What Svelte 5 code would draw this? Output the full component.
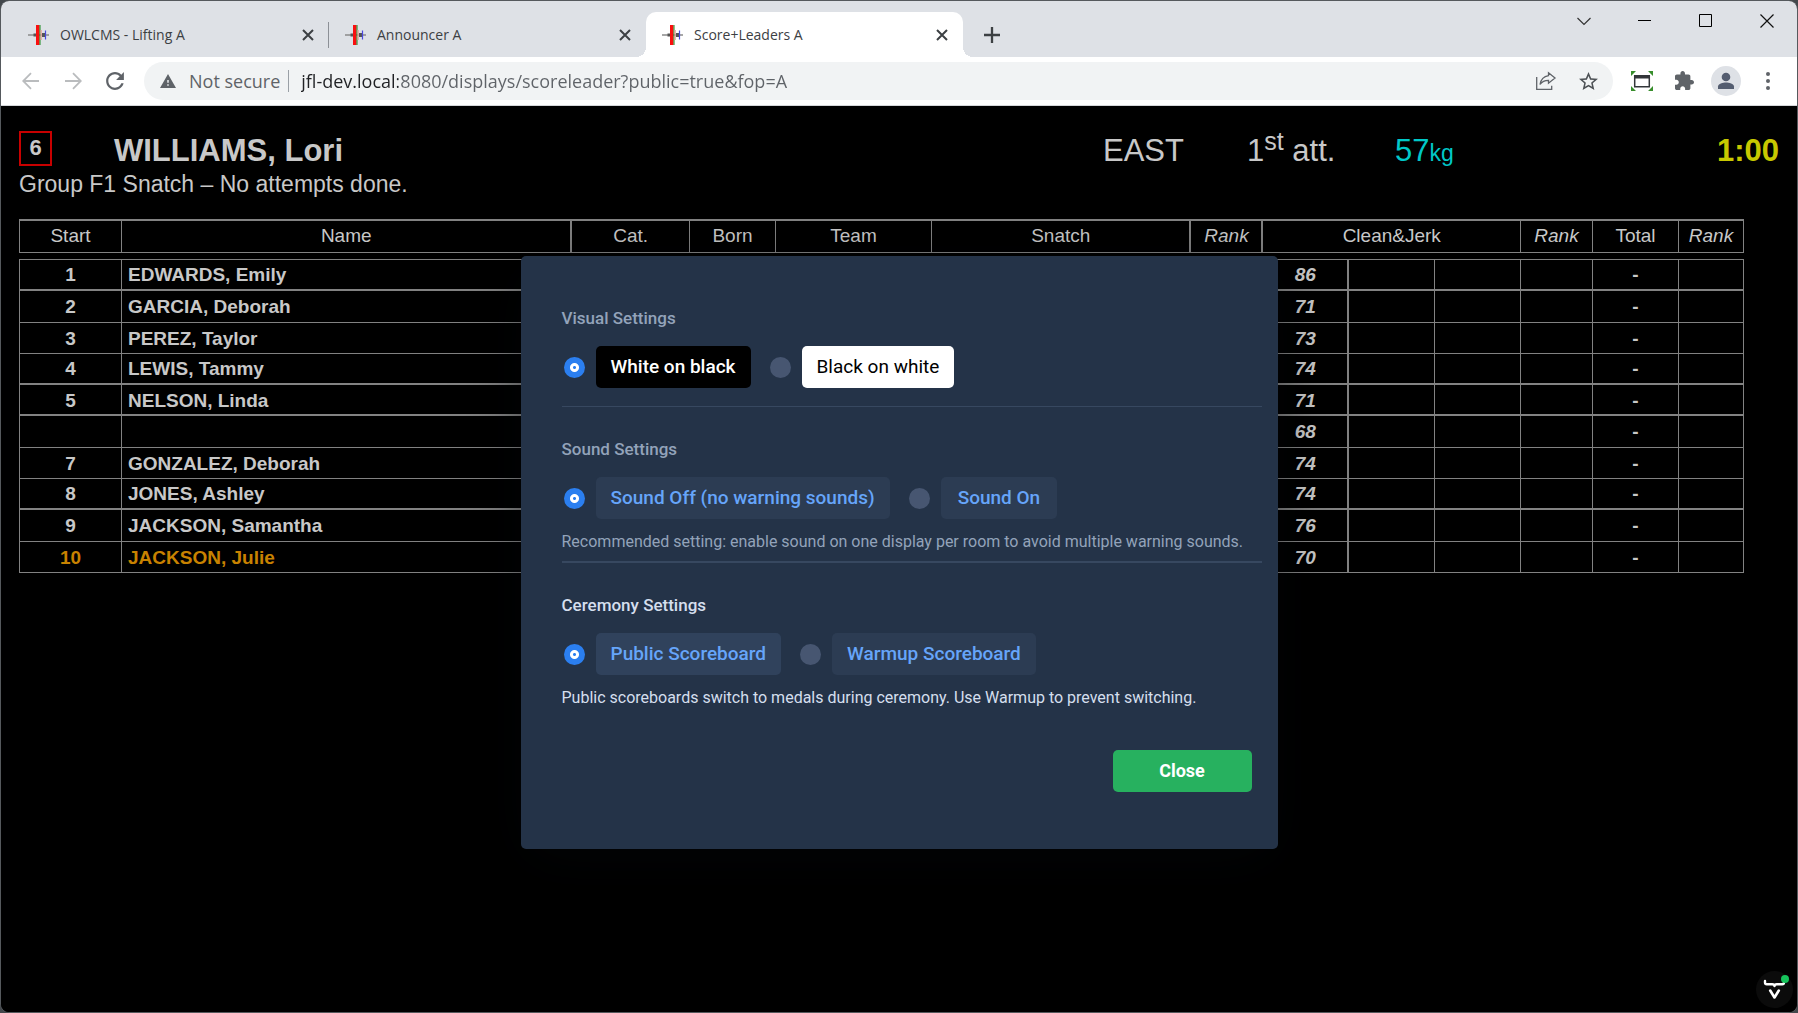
<script lang="ts">
  const tabs = [
    { title: 'OWLCMS - Lifting A', active: false },
    { title: 'Announcer A', active: false },
    { title: 'Score+Leaders A', active: true }
  ];

  const athletes = [
    { start: '1', name: 'EDWARDS, Emily', request: '86' },
    { start: '2', name: 'GARCIA, Deborah', request: '71' },
    { start: '3', name: 'PEREZ, Taylor', request: '73' },
    { start: '4', name: 'LEWIS, Tammy', request: '74' },
    { start: '5', name: 'NELSON, Linda', request: '71' },
    { start: '', name: '', request: '68' },
    { start: '7', name: 'GONZALEZ, Deborah', request: '74' },
    { start: '8', name: 'JONES, Ashley', request: '74' },
    { start: '9', name: 'JACKSON, Samantha', request: '76' },
    { start: '10', name: 'JACKSON, Julie', request: '70', next: true }
  ];

  let theme = $state('dark');
  let sound = $state('off');
  let ceremony = $state('public');
  let open = $state(true);
  let url = $state('jfl-dev.local:8080/displays/scoreleader?public=true&fop=A');
</script>

<div class="window">
  <div class="strip">
    {#each tabs as tab}
      <div class="tab" class:active={tab.active}>
        <svg class="favicon" viewBox="0 0 21 20" aria-hidden="true">
          <path d="M0 10h21" stroke="#8a8a8a" stroke-width="1.4" />
          <path d="M5.500 8.500h2.500v3H5.500zM14 8h3v4h-3z" fill="#555" />
          <path d="M8 0h3.500v20H8z" fill="#fa0f0f" />
          <path d="M11.500 0h1v20h-1z" fill="#158a1c" />
          <path d="M12.500 5h1.300v10h-1.300z" fill="#e9a39c" />
          <path d="M17.500 5.500v9" stroke="#4b49e0" stroke-width="1.200" />
        </svg>
        <button class="title">{tab.title}</button>
        <button class="x" aria-label="Close tab">
          <svg viewBox="0 0 12 12" width="12" height="12"><path d="M1 1l10 10M11 1L1 11" stroke="#3c4043" stroke-width="2" /></svg>
        </button>
      </div>
    {/each}
    <button class="plus" aria-label="New tab">
      <svg viewBox="0 0 16 16" width="16" height="16"><path d="M8 0v16M0 8h16" stroke="#3c4043" stroke-width="2.300" /></svg>
    </button>
    <div class="controls">
      <button aria-label="Search tabs"><svg viewBox="0 0 14 14" width="14" height="14"><path d="M.5 4L7 10.500 13.500 4" stroke="#333" stroke-width="1.200" fill="none" /></svg></button>
      <button aria-label="Minimize"><svg viewBox="0 0 14 14" width="14" height="14"><path d="M0 6.500h13" stroke="#000" /></svg></button>
      <button aria-label="Maximize"><svg viewBox="0 0 14 14" width="14" height="14"><path d="M.5.5h12v12H.5z" stroke="#000" fill="none" /></svg></button>
      <button aria-label="Close window"><svg viewBox="0 0 14 14" width="14" height="14"><path d="M.5.500l13 13M13.500.500l-13 13" stroke="#111" stroke-width="1.200" /></svg></button>
    </div>
  </div>

  <div class="toolbar">
    <button class="tool" aria-label="Back"><svg viewBox="0 0 18 18" width="18" height="18"><path d="M17 9H1.500M9 1.200L1.200 9 9 16.800" stroke="#babcbe" stroke-width="1.800" fill="none" /></svg></button>
    <button class="tool" aria-label="Forward"><svg viewBox="0 0 18 18" width="18" height="18"><path d="M1 9h15.500M9 1.200L16.800 9 9 16.800" stroke="#babcbe" stroke-width="1.800" fill="none" /></svg></button>
    <button class="tool" aria-label="Reload"><svg viewBox="3 3 18 18" width="20" height="20"><path fill="#5f6368" d="M17.650 6.350C16.200 4.900 14.210 4 12 4c-4.420 0-7.990 3.580-7.990 8s3.570 8 7.990 8c3.730 0 6.840-2.550 7.730-6h-2.080c-.82 2.330-3.040 4-5.650 4-3.310 0-6-2.690-6-6s2.690-6 6-6c1.660 0 3.140.69 4.220 1.780L13 11h7V4l-2.350 2.350z" /></svg></button>
    <div class="address">
      <svg viewBox="1 2 22 19" width="16" height="14" aria-hidden="true"><path fill="#5f6368" d="M1 21h22L12 2 1 21zm12-3h-2v-2h2v2zm0-4h-2v-4h2v4z" /></svg>
      <button class="security">Not secure</button>
      <input class="url" aria-label="Address" bind:value={url} spellcheck="false" />
      <button class="tool" aria-label="Share">
        <svg viewBox="0 0 22 20" width="22" height="20" fill="none" stroke="#5f6368" stroke-width="1.300"><path d="M1.700 6v12.300h15v-3.600" /><path d="M13.500 1.800l6.500 5.200-6.500 5.200V9.300c-4 0-6.500 1.200-8.500 4.200.8-4.500 3.400-8 8.500-8.800z" /></svg>
      </button>
      <button class="tool" aria-label="Bookmark"><svg viewBox="2 2 20 19" width="19" height="18"><path fill="#4d5155" d="M22 9.240l-7.190-.62L12 2 9.190 8.630 2 9.240l5.460 4.730L5.820 21 12 17.270 18.180 21l-1.630-7.030L22 9.240zM12 15.400l-3.760 2.270 1-4.280-3.320-2.880 4.380-.38L12 6.100l1.710 4.040 4.380.38-3.320 2.880 1 4.280L12 15.400z" /></svg></button>
    </div>
    <button class="tool" aria-label="Screen capture">
      <svg viewBox="0 0 22 20" width="22" height="20"><path fill="#388e2c" d="M0 0h5L0 5zM22 0h-5l5 5zM0 20h5l-5-5zM22 20h-5l5-5z" /><path d="M3.700 4.800h14.600v11H3.700z" fill="#fff" stroke="#33363a" stroke-width="1.500" /><path d="M3.500 4.500h15v3h-15z" fill="#33363a" /></svg>
    </button>
    <button class="tool" aria-label="Extensions"><svg viewBox="2 1 21 21" width="19" height="19"><path fill="#5f6368" d="M20.500 11H19V7c0-1.100-.9-2-2-2h-4V3.500C13 2.120 11.880 1 10.500 1S8 2.120 8 3.500V5H4c-1.100 0-1.990.9-1.990 2v3.800H3.500c1.490 0 2.700 1.210 2.700 2.700s-1.210 2.700-2.700 2.700H2V20c0 1.100.9 2 2 2h3.800v-1.500c0-1.490 1.210-2.700 2.700-2.700 1.490 0 2.700 1.210 2.700 2.700V22H17c1.100 0 2-.9 2-2v-4h1.500c1.380 0 2.500-1.120 2.500-2.500S21.880 11 20.500 11z" /></svg></button>
    <button class="tool" aria-label="Profile"><svg viewBox="0 0 30 30" width="30" height="30"><circle cx="15" cy="15" r="15" fill="#dee1e6" /><circle cx="15" cy="11" r="4.300" fill="#545d70" /><path fill="#545d70" d="M7 23v-2.400c0-2.900 5-4.100 8-4.100s8 1.200 8 4.100V23z" /></svg></button>
    <button class="tool" aria-label="Menu"><svg viewBox="0 0 4 18" width="4" height="18" fill="#5f6368"><circle cx="2" cy="2" r="2" /><circle cx="2" cy="9" r="2" /><circle cx="2" cy="16" r="2" /></svg></button>
  </div>

  <main class="board">
    <header class="lifter">
      <div class="number">6</div>
      <div class="name">WILLIAMS, Lori</div>
      <div>EAST</div>
      <div>1<sup>st</sup> att.</div>
      <div class="weight">57<small>kg</small></div>
      <div class="clock">1:00</div>
    </header>
    <p class="group">Group F1 Snatch – No attempts done.</p>

    <table>
      <colgroup>
        <col class="c-start" /><col /><col class="c-cat" /><col class="c-born" /><col class="c-team" />
        <col class="c-first" /><col class="c-try" /><col class="c-try" /><col class="c-rank" />
        <col class="c-try" /><col class="c-try" /><col class="c-try" /><col class="c-rank" />
        <col class="c-total" /><col class="c-last" />
      </colgroup>
      <thead>
        <tr>
          <th>Start</th>
          <th class="heavy">Name</th>
          <th>Cat.</th>
          <th>Born</th>
          <th>Team</th>
          <th class="heavy" colspan="3">Snatch</th>
          <th class="heavy rank">Rank</th>
          <th colspan="3">Clean&amp;Jerk</th>
          <th class="rank">Rank</th>
          <th>Total</th>
          <th class="rank">Rank</th>
        </tr>
      </thead>
      <tbody>
        <tr class="spacer"><td colspan="15"></td></tr>
        {#each athletes as a}
          <tr class:next={a.next}>
            <td>{a.start}</td>
            <td class="who">{a.name}</td>
            <td></td><td></td><td></td>
            <td></td><td></td><td></td><td></td>
            <td class="request">{a.request}</td>
            <td></td><td></td><td></td>
            <td class="sum">-</td>
            <td></td>
          </tr>
        {/each}
      </tbody>
    </table>

    {#if open}
      <div class="overlay">
        <div class="dialog" role="dialog" aria-label="Display settings">
          <fieldset>
            <legend>Visual Settings</legend>
            <div class="options">
              <label><input type="radio" value="dark" bind:group={theme} /><span class="chip black">White on black</span></label>
              <label><input type="radio" value="light" bind:group={theme} /><span class="chip white">Black on white</span></label>
            </div>
          </fieldset>
          <hr />
          <fieldset>
            <legend>Sound Settings</legend>
            <div class="options">
              <label><input type="radio" value="off" bind:group={sound} /><span class="chip">Sound Off (no warning sounds)</span></label>
              <label><input type="radio" value="on" bind:group={sound} /><span class="chip wide">Sound On</span></label>
            </div>
            <p>Recommended setting: enable sound on one display per room to avoid multiple warning sounds.</p>
          </fieldset>
          <hr class="thick" />
          <fieldset class="bright">
            <legend>Ceremony Settings</legend>
            <div class="options">
              <label><input type="radio" value="public" bind:group={ceremony} /><span class="chip hover">Public Scoreboard</span></label>
              <label><input type="radio" value="warmup" bind:group={ceremony} /><span class="chip">Warmup Scoreboard</span></label>
            </div>
            <p>Public scoreboards switch to medals during ceremony. Use Warmup to prevent switching.</p>
          </fieldset>
          <button class="close" onclick={() => (open = false)}>Close</button>
        </div>
      </div>
    {/if}

    <button class="devtools" aria-label="Developer tools">
      <svg viewBox="0 0 37 37" width="37" height="37">
        <circle cx="18.500" cy="18.500" r="18.500" fill="#0b0b0b" />
        <path d="M9 10v1.500c0 1.200.6 1.800 1.800 1.800h5.400c1.400 0 2.300.6 2.300 1.800 0-1.200.9-1.800 2.300-1.800h5.400c1.200 0 1.800-.6 1.800-1.800" fill="none" stroke="#fff" stroke-width="2.400" stroke-linecap="round" stroke-linejoin="round" />
        <path d="M14.200 19.500l4.300 7 4.300-7" fill="none" stroke="#fff" stroke-width="2.600" stroke-linecap="round" stroke-linejoin="round" />
        <circle cx="29" cy="8" r="4" fill="#16c35b" />
      </svg>
    </button>
  </main>
</div>

<style>
  :global(body) {
    background: #43484c;
  }
  * {
    box-sizing: border-box;
  }
  button {
    border: 0;
    padding: 0;
    background: none;
    font: inherit;
    color: inherit;
    cursor: pointer;
  }
  svg {
    display: block;
    flex: none;
  }
  .window {
    display: flex;
    flex-direction: column;
    min-height: 100vh;
    border: 1px solid #55595d;
    border-radius: 9px;
    overflow: hidden;
    background: #000;
    font-family: 'Open Sans', 'Noto Sans', sans-serif;
  }

  /* tab strip */
  .strip {
    display: flex;
    align-items: flex-end;
    height: 56px;
    padding-left: 11px;
    background: #dee1e6;
    color: #3c4043;
  }
  .tab {
    position: relative;
    display: flex;
    align-items: center;
    gap: 11px;
    width: 317px;
    height: 45px;
    padding: 0 15px 0 16px;
    font-size: 14px;
  }
  .tab:first-child::after {
    content: '';
    position: absolute;
    right: 0;
    top: 10px;
    width: 1px;
    height: 26px;
    background: #8c9096;
  }
  .tab.active {
    background: #fff;
    border-radius: 10px 10px 0 0;
  }
  .tab.active::before,
  .tab.active::after {
    content: '';
    position: absolute;
    bottom: 0;
    width: 10px;
    height: 10px;
  }
  .tab.active::before {
    right: 100%;
    background: radial-gradient(circle at 0 0, transparent 10px, #fff 10px);
  }
  .tab.active::after {
    left: 100%;
    background: radial-gradient(circle at 100% 0, transparent 10px, #fff 10px);
  }
  .favicon {
    width: 21px;
    height: 20px;
  }
  .title {
    flex: 1;
    text-align: left;
    white-space: nowrap;
  }
  .plus {
    width: 28px;
    height: 45px;
    margin-left: 15px;
    display: grid;
    place-items: center;
  }
  .controls {
    display: flex;
    align-self: flex-start;
    margin-left: auto;
  }
  .controls button {
    display: grid;
    place-items: center;
    width: 61px;
    height: 40px;
  }

  /* toolbar */
  .toolbar {
    display: flex;
    align-items: center;
    height: 49px;
    padding: 0 8px 1px 9px;
    background: #fff;
    border-bottom: 1px solid #d5d7da;
  }
  .tool {
    flex: none;
    display: grid;
    place-items: center;
    width: 42px;
    height: 38px;
  }
  .address {
    flex: 1;
    display: flex;
    align-items: center;
    height: 38px;
    margin: 0 8px;
    padding: 0 4px 0 16px;
    border-radius: 19px;
    background: #f1f3f4;
    color: #5f6368;
    font-size: 18px;
  }
  .security {
    margin-left: 13px;
    padding-right: 8px;
    border-right: 1px solid #9aa0a6;
    line-height: 22px;
    white-space: nowrap;
  }
  .url {
    flex: 1;
    min-width: 0;
    margin-left: 12px;
    padding: 0;
    border: 0;
    outline: 0;
    font: inherit;
    line-height: 24px;
    color: #5f6368;
    background: linear-gradient(90deg, #202124 97px, #5f6368 97px);
    background-clip: text;
    -webkit-text-fill-color: transparent;
  }

  /* scoreboard */
  .board {
    position: relative;
    flex: 1;
    padding: 25px 18px 0;
    background: #000;
    color: #c8c8c8;
    font-family: 'Liberation Sans', Arial, sans-serif;
  }
  .lifter {
    display: grid;
    grid-template-columns: 95px 1fr 144px 148px 148px 236px;
    align-items: end;
    height: 39px;
    font-size: 31px;
    line-height: 38px;
    white-space: nowrap;
  }
  .number {
    align-self: start;
    width: 33px;
    height: 35px;
    border: 2px solid #c80000;
    font-size: 22px;
    font-weight: 700;
    line-height: 29px;
    text-align: center;
  }
  .name {
    font-weight: 700;
  }
  sup {
    font-size: 25px;
    line-height: 0;
  }
  .weight {
    color: #00c8c8;
  }
  small {
    font-size: 23px;
    line-height: 0;
  }
  .clock {
    color: #c8c800;
    font-weight: 700;
    text-align: right;
  }
  .group {
    margin: 0 0 21px;
    font-size: 23px;
    line-height: 28px;
  }
  table {
    width: calc(100% - 35px);
    table-layout: fixed;
    border-collapse: collapse;
    font-size: 19px;
    line-height: 22px;
  }
  .c-start { width: 102px; }
  .c-cat { width: 118px; }
  .c-born { width: 86px; }
  .c-team { width: 156px; }
  .c-first { width: 87px; }
  .c-try { width: 86px; }
  .c-rank { width: 72px; }
  .c-total { width: 86px; }
  .c-last { width: 65px; }
  th,
  td {
    padding: 0;
    height: 31px;
    border: 1px solid #828282;
    text-align: center;
  }
  th {
    height: 32px;
    border-top-width: 2px;
    font-weight: 400;
  }
  th.heavy {
    border-right-width: 2px;
  }
  .rank {
    font-style: italic;
  }
  td {
    padding-top: 2px;
    font-weight: 700;
  }
  .spacer td {
    height: 7px;
    padding: 0;
    border-left: 0;
    border-right: 0;
    line-height: 0;
  }
  tr:nth-child(2) td,
  tr:nth-child(5) td,
  tr:nth-child(6) td,
  tr:nth-child(9) td {
    border-bottom-width: 2px;
  }
  tr:nth-child(3) td,
  tr:nth-child(7) td,
  tr:nth-child(10) td {
    height: 32px;
  }
  .who {
    padding-left: 6px;
    text-align: left;
  }
  .request {
    border-right-width: 2px;
    font-style: italic;
  }
  .next td {
    color: #c88200;
  }
  .next .request,
  .next .sum {
    color: #c8c8c8;
  }

  /* settings dialog */
  .overlay {
    position: absolute;
    inset: 0;
    display: grid;
    place-items: center;
    padding-bottom: 13px;
  }
  .dialog {
    display: flex;
    flex-direction: column;
    width: 757px;
    padding: 49px 16px 57px 41px;
    border-radius: 5px;
    background: #243348;
    box-shadow: 0 13px 54px -7px rgba(5, 8, 12, 0.6);
    color: #93a3ba;
    font-family: Roboto, sans-serif;
  }
  fieldset {
    margin: 0;
    padding: 0;
    border: 0;
    min-width: 0;
  }
  legend {
    padding: 0;
    font-size: 17px;
    font-weight: 500;
    line-height: 26px;
  }
  .options {
    display: flex;
    gap: 17px;
    margin-top: 15px;
  }
  label {
    display: flex;
    align-items: center;
    gap: 11px;
    padding-left: 2px;
    cursor: pointer;
  }
  input[type='radio'] {
    appearance: none;
    width: 21px;
    height: 21px;
    margin: 0;
    border-radius: 50%;
    background: #475671;
  }
  input[type='radio']:checked {
    background: radial-gradient(circle, #2b7ff0 1px, #fff 2px, #fff 4px, #2b7ff0 5px);
  }
  .chip {
    padding: 0 15px;
    border-radius: 5px;
    background: #2c3c53;
    color: #66a5fa;
    font-size: 19px;
    font-weight: 500;
    line-height: 42px;
    white-space: nowrap;
  }
  .chip.hover {
    background: #30425c;
  }
  .chip.wide {
    padding: 0 17px;
  }
  .chip.black {
    background: #000;
    color: #fff;
  }
  .chip.white {
    background: #fff;
    color: #000;
    font-weight: 400;
  }
  p {
    margin: 0;
  }
  .dialog p {
    margin-top: 10px;
    font-size: 16px;
    line-height: 26px;
  }
  hr {
    width: 100%;
    height: 1px;
    margin: 18px 0 29px;
    border: 0;
    background: #374860;
  }
  hr.thick {
    height: 2px;
    margin: 6px 0 29px;
  }
  .bright {
    color: #d5dfee;
  }
  .close {
    align-self: flex-end;
    width: 139px;
    margin: 39px 10px 0 0;
    border-radius: 5px;
    background: #27b15f;
    color: #fff;
    font-size: 18px;
    font-weight: 700;
    line-height: 42px;
  }
  .devtools {
    position: absolute;
    right: 4px;
    bottom: 4px;
  }
</style>
